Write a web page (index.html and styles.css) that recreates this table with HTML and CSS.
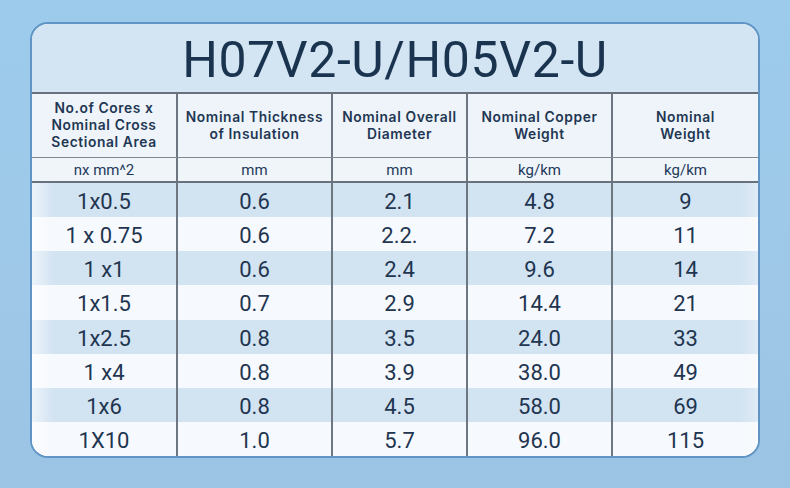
FILE: index.html
```
<!DOCTYPE html>
<html>
<head>
<meta charset="utf-8">
<link rel="stylesheet" href="styles.css">
</head>
<body>
<div class="card">
  <div class="title">H07V2-U/H05V2-U</div>
  <div class="row head">
    <div class="cell">No.of Cores x<br>Nominal Cross<br>Sectional Area</div>
    <div class="cell">Nominal Thickness<br>of Insulation</div>
    <div class="cell">Nominal Overall<br>Diameter</div>
    <div class="cell">Nominal Copper<br>Weight</div>
    <div class="cell">Nominal<br>Weight</div>
  </div>
  <div class="row units">
    <div class="cell">nx mm^2</div>
    <div class="cell">mm</div>
    <div class="cell">mm</div>
    <div class="cell">kg/km</div>
    <div class="cell">kg/km</div>
  </div>
  <div class="body">
    <div class="row data"><div class="cell">1x0.5</div><div class="cell">0.6</div><div class="cell">2.1</div><div class="cell">4.8</div><div class="cell">9</div></div>
    <div class="row data"><div class="cell">1 x 0.75</div><div class="cell">0.6</div><div class="cell">2.2.</div><div class="cell">7.2</div><div class="cell">11</div></div>
    <div class="row data"><div class="cell">1 x1</div><div class="cell">0.6</div><div class="cell">2.4</div><div class="cell">9.6</div><div class="cell">14</div></div>
    <div class="row data"><div class="cell">1x1.5</div><div class="cell">0.7</div><div class="cell">2.9</div><div class="cell">14.4</div><div class="cell">21</div></div>
    <div class="row data"><div class="cell">1x2.5</div><div class="cell">0.8</div><div class="cell">3.5</div><div class="cell">24.0</div><div class="cell">33</div></div>
    <div class="row data"><div class="cell">1 x4</div><div class="cell">0.8</div><div class="cell">3.9</div><div class="cell">38.0</div><div class="cell">49</div></div>
    <div class="row data"><div class="cell">1x6</div><div class="cell">0.8</div><div class="cell">4.5</div><div class="cell">58.0</div><div class="cell">69</div></div>
    <div class="row data"><div class="cell">1X10</div><div class="cell">1.0</div><div class="cell">5.7</div><div class="cell">96.0</div><div class="cell">115</div></div>
  </div>
</div>
</body>
</html>
```
FILE: styles.css
```
html, body {
  margin: 0;
  padding: 0;
}
body {
  width: 790px;
  height: 488px;
  overflow: hidden;
  background: linear-gradient(180deg, #9ccbec 0%, #9fc8e8 60%, #9bc4e4 100%);
  font-family: Roboto, "Noto Sans", sans-serif;
  color: #1c3450;
  padding-top: 22px;
  box-sizing: border-box;
}
.card {
  margin-left: 30px;
  width: 730px;
  height: 436px;
  box-sizing: border-box;
  border: 2px solid #5f94c4;
  border-radius: 18px;
  overflow: hidden;
  background: #f6f9fc;
  display: flex;
  flex-direction: column;
}
.title {
  height: 68px;
  background: #d3e4f3;
  border-bottom: 2px solid #69727c;
  font-size: 50px;
  line-height: 72px;
  text-align: center;
  color: #1a334e;
  letter-spacing: 0.6px;
}
.row {
  display: grid;
  grid-template-columns: 144px 155px 135px 145px 1fr;
}
.cell {
  text-align: center;
  display: flex;
  align-items: center;
  justify-content: center;
}
.cell + .cell {
  border-left: 2px solid #6e7781;
}
.head {
  height: 63px;
  background: #eef4fa;
  border-bottom: 1px solid #7f8891;
  font-family: Inter, "Noto Sans", sans-serif;
  font-weight: 600;
  font-size: 13.8px;
  line-height: 17px;
  letter-spacing: 0.6px;
  color: #1f3753;
}
.units {
  height: 23px;
  background: #f0f5fa;
  border-bottom: 2px solid #69727c;
  font-size: 15px;
  color: #23395a;
}
.body {
  flex: 1;
  display: flex;
  flex-direction: column;
}
.data {
  flex: 1;
  font-size: 22px;
  color: #1f3550;
}
.data .cell {
  padding-top: 3px;
}
.data:nth-child(odd) {
  background: #d2e3f2;
}
.data:nth-child(even) {
  background: #f6f9fd;
}
.data .cell:first-child {
  background: linear-gradient(90deg, rgba(255,255,255,0.6) 0px, rgba(255,255,255,0) 22px);
}
.data .cell:last-child {
  background: linear-gradient(270deg, rgba(255,255,255,0.3) 0px, rgba(255,255,255,0) 18px);
}
```
